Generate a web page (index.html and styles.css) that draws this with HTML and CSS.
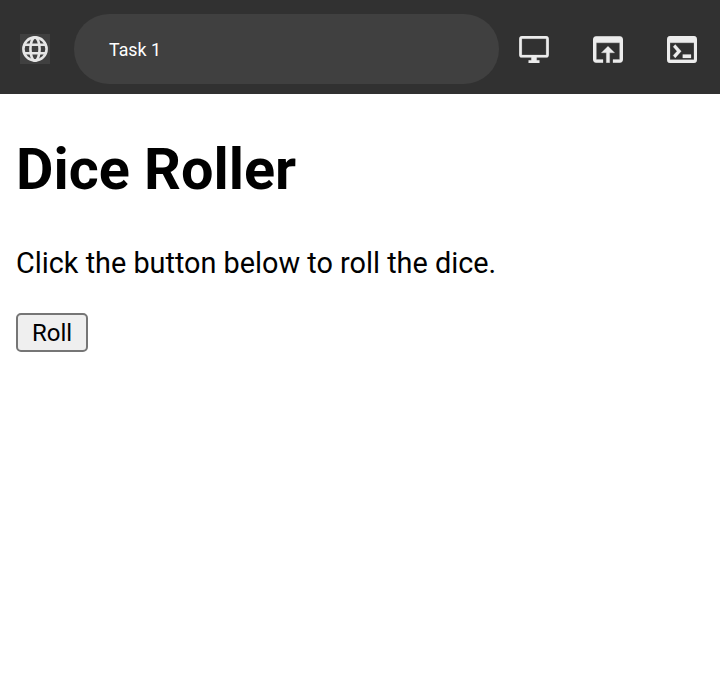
FILE: index.html
```html
<!DOCTYPE html>
<html lang="en">
<head>
<meta charset="utf-8">
<title>Task 1</title>
<link rel="stylesheet" href="styles.css">
</head>
<body>
<header class="toolbar">
  <span class="site-icon">
    <svg viewBox="0 0 30 30" fill="none" stroke="#e6e6e6" stroke-width="2.6">
      <circle cx="15" cy="15" r="11.6"/>
      <ellipse cx="15" cy="15" rx="4.600" ry="11.6"/>
      <path d="M4 10.800h22M4 19.200h22"/>
    </svg>
  </span>
  <div class="address">Task 1</div>
  <nav class="actions">
    <svg viewBox="1 2 22 20"><path d="M21 2H3c-1.1 0-2 .9-2 2v12c0 1.1.9 2 2 2h7v2H8v2h8v-2h-2v-2h7c1.1 0 2-.9 2-2V4c0-1.1-.9-2-2-2zm0 14H3V4h18v12z"/></svg>
    <svg viewBox="3 4 18 16"><path d="M19 4H5c-1.11 0-2 .9-2 2v12c0 1.1.89 2 2 2h4v-2H5V8h14v10h-4v2h4c1.1 0 2-.9 2-2V6c0-1.1-.89-2-2-2zm-7 6l-4 4h3v6h2v-6h3l-4-4z"/></svg>
    <svg viewBox="2 4 20 16" preserveAspectRatio="none"><path d="M20 4H4c-1.11 0-2 .9-2 2v12c0 1.1.89 2 2 2h16c1.1 0 2-.9 2-2V6c0-1.1-.89-2-2-2zm0 14H4V8h16v10zm-2-1h-5.500v-2H18v2zM7.500 17l-1.410-1.410L8.670 13l-2.590-2.590L7.500 9l4 4-4 4z"/></svg>
  </nav>
</header>
<main class="page">
  <h1 class="title">Dice Roller</h1>
  <p class="intro">Click the button below to roll the dice.</p>
  <button class="roll">Roll</button>
</main>
</body>
</html>
```
FILE: styles.css
```css
* { box-sizing: border-box; }
body { margin: 0; background: #fff; color: #000; font-family: Roboto, sans-serif; }
.toolbar { display: flex; align-items: center; height: 94px; padding: 4px 23px 0 20px; background: #313131; }
.site-icon { width: 30px; height: 30px; background: #404040; }
.site-icon svg { display: block; width: 30px; height: 30px; }
.address { width: 425px; height: 70px; margin-left: 24px; padding-left: 35px; border-radius: 35px; background: #404040; color: #fff; font-size: 17.800px; line-height: 71px; }
.actions { display: flex; gap: 44px; margin-left: 20px; }
.actions svg { display: block; width: 30px; height: 27px; fill: #ececec; stroke: #ececec; stroke-width: 0.15; }
.page { padding: 0 16px; }
.title { margin: 41px 0 0; font-size: 57.600px; line-height: 70px; font-weight: 700; }
.intro { margin: 38px 0 0; font-size: 28.840px; line-height: 40px; }
.roll { display: block; width: 72px; height: 39px; margin: 30px 0 0; padding: 2px 0 0; border: 2px solid #767676; border-radius: 5px; background: #efefef; color: #000; font: 24px/33px Roboto, sans-serif; }
```
